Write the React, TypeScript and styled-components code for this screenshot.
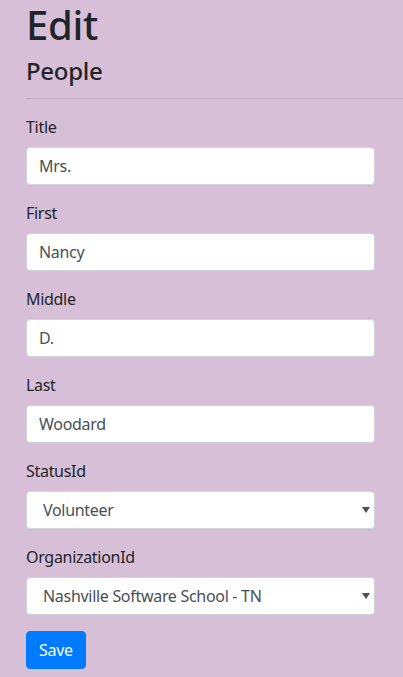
import React from 'react';
import styled, { createGlobalStyle } from 'styled-components';

const GlobalStyle = createGlobalStyle`
  html, body {
    margin: 0;
    padding: 0;
    background: #d8bfd8;
  }
  body {
    font-family: "Noto Sans", "Open Sans", sans-serif;
    font-size: 16px;
    line-height: 1.5;
    letter-spacing: -0.3px;
    color: #212529;
    overflow: hidden;
  }
`;

const Page = styled.div`
  padding: 1px 28px 0 26px;
`;

const Heading = styled.h1`
  margin: 0 0 8px;
  font-size: 40px;
  font-weight: 500;
  line-height: 1.2;
`;

const SubHeading = styled.h4`
  margin: 0;
  font-size: 24px;
  font-weight: 500;
  line-height: 1.2;
`;

const Rule = styled.hr`
  margin: 12px -28px 16px 0;
  border: 0;
  border-top: 1px solid rgba(0, 0, 0, 0.1);
`;

const Form = styled.form`
  display: flex;
  flex-direction: column;
`;

const Group = styled.div`
  display: flex;
  flex-direction: column;
  margin-bottom: 16px;
`;

const Label = styled.label`
  margin-bottom: 8px;
  line-height: 24px;
`;

const Input = styled.input`
  box-sizing: border-box;
  height: 38px;
  width: 100%;
  padding: 6px 12px;
  font: inherit;
  letter-spacing: inherit;
  color: #495057;
  background: #fff;
  border: 1px solid #ced4da;
  border-radius: 4px;
  outline: none;
`;

const SelectWrap = styled.div`
  position: relative;
`;

const Select = styled.select`
  box-sizing: border-box;
  height: 38px;
  width: 100%;
  padding: 6px 24px 6px 16px;
  font: inherit;
  letter-spacing: inherit;
  color: #495057;
  background: #fff;
  border: 1px solid #ced4da;
  border-radius: 4px;
  appearance: none;
  outline: none;
`;

const Arrow = styled.svg`
  position: absolute;
  right: 5px;
  top: 16px;
  pointer-events: none;
`;

const Button = styled.button`
  align-self: flex-start;
  height: 38px;
  padding: 6px 12px;
  font: inherit;
  letter-spacing: inherit;
  color: #fff;
  background: #007bff;
  border: 1px solid #007bff;
  border-radius: 4px;
`;

const fields = [
  { label: 'Title', value: 'Mrs.' },
  { label: 'First', value: 'Nancy' },
  { label: 'Middle', value: 'D.' },
  { label: 'Last', value: 'Woodard' },
];

const selects = [
  { label: 'StatusId', value: 'Volunteer' },
  { label: 'OrganizationId', value: 'Nashville Software School - TN' },
];

const App: React.FunctionComponent = () => (
  <Page>
    <GlobalStyle />
    <Heading>Edit</Heading>
    <SubHeading>People</SubHeading>
    <Rule />
    <Form onSubmit={e => e.preventDefault()}>
      {fields.map(f => (
        <Group key={f.label}>
          <Label>{f.label}</Label>
          <Input defaultValue={f.value} />
        </Group>
      ))}
      {selects.map(s => (
        <Group key={s.label}>
          <Label>{s.label}</Label>
          <SelectWrap>
            <Select defaultValue={s.value}>
              <option>{s.value}</option>
            </Select>
            <Arrow width="8" height="6" viewBox="0 0 8 6">
              <path d="M0 0h8L4 6z" fill="#495057" />
            </Arrow>
          </SelectWrap>
        </Group>
      ))}
      <Button type="submit">Save</Button>
    </Form>
  </Page>
);

export default App;
